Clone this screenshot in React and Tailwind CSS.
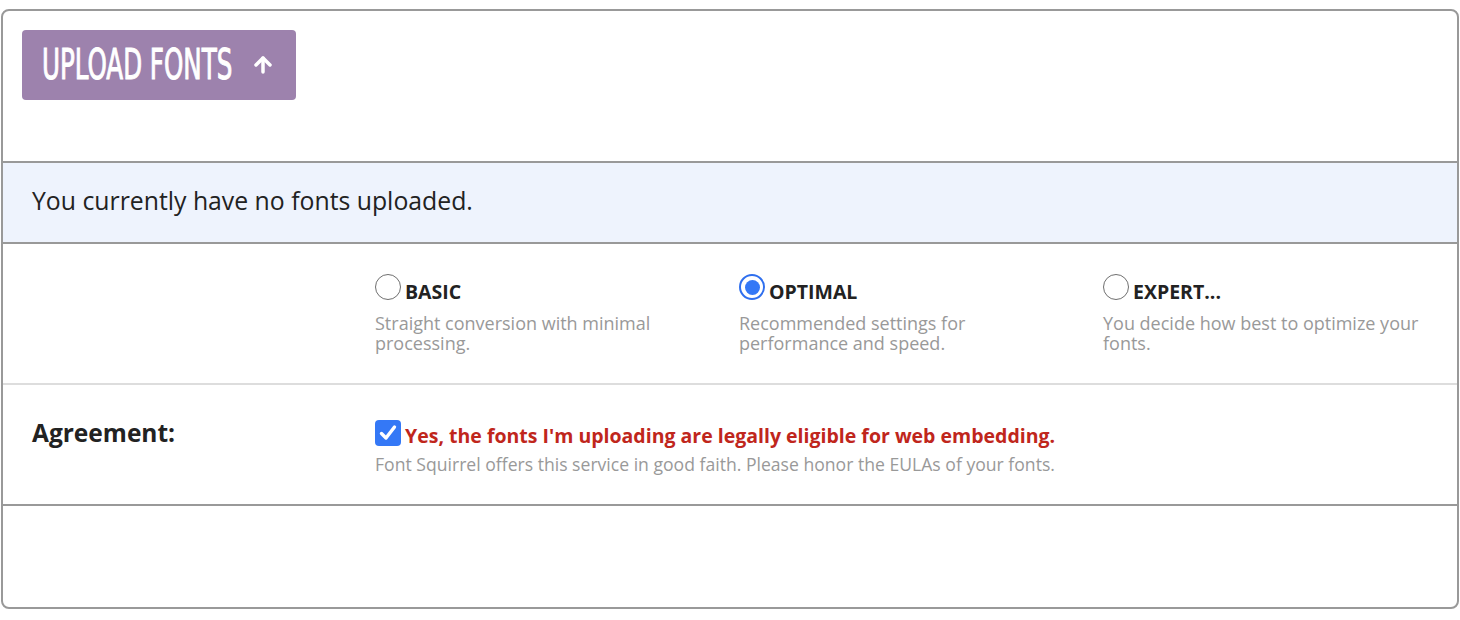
import { ArrowUp } from "lucide-react";

const options = [
  { id: "basic", title: "BASIC", desc: "Straight conversion with minimal processing." },
  { id: "optimal", title: "OPTIMAL", desc: "Recommended settings for performance and speed." },
  { id: "expert", title: "EXPERT...", desc: "You decide how best to optimize your fonts." },
];

function Radio({ checked }) {
  if (checked) {
    return (
      <span className="w-[26px] h-[26px] rounded-full border-[2.5px] border-[#2f6fee] flex items-center justify-center shrink-0">
        <span className="w-[15px] h-[15px] rounded-full bg-[#3478f6]" />
      </span>
    );
  }
  return <span className="w-[26px] h-[26px] rounded-full border-[1.5px] border-[#6f6f6f] shrink-0" />;
}

function App() {
  const body = { fontFamily: "'Open Sans', 'Noto Sans', sans-serif" };

  return (
    <div className="w-[1460px] h-[620px] bg-white pt-[9px] px-[1px]" style={body}>
      <div className="border-2 border-[#999] rounded-[8px] h-[600px] flex flex-col overflow-hidden">
        {/* Upload */}
        <div className="h-[152px] pt-[19px] pl-[19px] border-b-2 border-[#999]">
          <button className="w-[274px] h-[70px] rounded-[4px] bg-[#9d82ad] text-white flex items-center pl-[20px]">
            <span className="w-[192px] h-[44px] flex items-center overflow-visible">
              <span
                className="text-[42px] leading-none whitespace-nowrap scale-x-[0.65] origin-left inline-block [-webkit-text-stroke:1px_white]"
                style={{ fontFamily: "'DejaVu Sans Condensed', 'Liberation Sans Narrow', sans-serif" }}
              >
                UPLOAD FONTS
              </span>
            </span>
            <ArrowUp size={24} strokeWidth={3.5} className="ml-[17px]" />
          </button>
        </div>

        {/* Message */}
        <div className="h-[81px] bg-[#eef3fd] border-b-2 border-[#999] flex items-center pl-[29px] pb-[3px]">
          <p className="text-[24.8px] text-[#222]">You currently have no fonts uploaded.</p>
        </div>

        {/* Options */}
        <div className="h-[141px] border-b-2 border-[#ddd] flex pl-[372px] pt-[30px] overflow-hidden">
          {options.map((o) => (
            <div key={o.id} className="w-[364px] shrink-0 pr-[30px]">
              <div className="flex items-start gap-[4px]">
                <Radio checked={o.id === "optimal"} />
                <span className="text-[19.5px] font-bold text-[#222] leading-none pt-[8px]">{o.title}</span>
              </div>
              <p className="text-[18px] leading-[20px] text-[#999] mt-[11px] w-[330px]">{o.desc}</p>
            </div>
          ))}
        </div>

        {/* Agreement */}
        <div className="h-[121px] border-b-2 border-[#999] flex pl-[29px] pt-[30px]">
          <div className="w-[343px] text-[24.5px] font-bold text-[#222] leading-[32px] mt-[2px]">Agreement:</div>
          <div>
            <div className="flex items-center gap-[4px]">
              <span className="w-[26px] h-[26px] rounded-[4px] bg-[#3478f6] flex items-center justify-center">
                <svg width="20" height="20" viewBox="0 0 20 20" fill="none">
                  <path d="M3.5 10.5 L8 15 L16.5 4" stroke="white" strokeWidth="3.4" strokeLinecap="round" strokeLinejoin="round" />
                </svg>
              </span>
              <span className="text-[19.5px] font-bold text-[#c0261c] pt-[6px]">
                Yes, the fonts I'm uploading are legally eligible for web embedding.
              </span>
            </div>
            <p className="text-[17.6px] text-[#999] mt-[1px]">
              Font Squirrel offers this service in good faith. Please honor the EULAs of your fonts.
            </p>
          </div>
        </div>

        <div className="flex-1" />
      </div>
    </div>
  );
}

export default App;
